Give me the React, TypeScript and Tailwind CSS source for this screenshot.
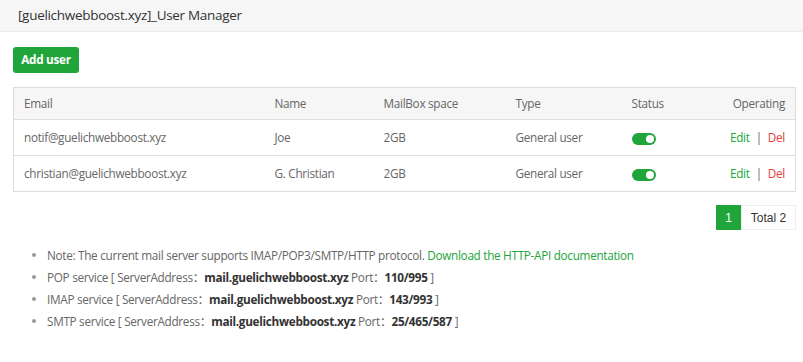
import React from "react";

type Row = { email: string; name: string; space: string; type: string };

const rows: Row[] = [
  { email: "notif@guelichwebboost.xyz", name: "Joe", space: "2GB", type: "General user" },
  { email: "christian@guelichwebboost.xyz", name: "G. Christian", space: "2GB", type: "General user" },
];

const services = [
  { label: "POP service", port: "110/995" },
  { label: "IMAP service", port: "143/993" },
  { label: "SMTP service", port: "25/465/587" },
];

const Toggle = () => (
  <span className="inline-flex items-center justify-end w-[24px] h-[12px] rounded-full bg-[#20a53a] pr-[2px]">
    <span className="w-[8px] h-[8px] rounded-full bg-white" />
  </span>
);

export default function App() {
  return (
    <div className="w-[803px] h-[362px] bg-white text-[11.75px] tracking-[-0.3px] text-[#666] font-['Open_Sans','Noto_Sans_CJK_SC',sans-serif] overflow-hidden">
      <div className="h-[32px] bg-[#f6f6f6] border-b border-[#eaeaea] flex items-center pl-[18px] text-[13.5px] text-[#333]">
        [guelichwebboost.xyz]_User Manager
      </div>

      <div className="pl-[13px] pr-[7px] pt-[15px]">
        <button className="h-[26px] w-[66px] rounded-[3px] bg-[#20a53a] text-white font-bold text-[11.75px]">
          Add user
        </button>

        <table className="mt-[14px] w-full border border-[#ddd] border-collapse">
          <thead>
            <tr className="bg-[#f6f6f6] h-[32px] text-left">
              <th className="font-normal pl-[10px] w-[261px]">Email</th>
              <th className="font-normal w-[109px]">Name</th>
              <th className="font-normal w-[132px]">MailBox space</th>
              <th className="font-normal w-[116px]">Type</th>
              <th className="font-normal">Status</th>
              <th className="font-normal text-right pr-[10px]">Operating</th>
            </tr>
          </thead>
          <tbody>
            {rows.map((r) => (
              <tr key={r.email} className="h-[36px] border-t border-[#ddd]">
                <td className="pl-[10px]">{r.email}</td>
                <td>{r.name}</td>
                <td>{r.space}</td>
                <td>{r.type}</td>
                <td className="align-middle pt-[2px]">
                  <Toggle />
                </td>
                <td className="text-right pr-[10px]">
                  <span className="text-[#20a53a]">Edit</span>
                  <span className="mx-[6px]">|</span>
                  <span className="text-[#e04040]">Del</span>
                </td>
              </tr>
            ))}
          </tbody>
        </table>

        <div className="flex justify-end mt-[13px]">
          <div className="flex h-[25px] text-[12px] tracking-normal font-['Liberation_Sans',Arial,sans-serif]">
            <span className="w-[25px] bg-[#20a53a] text-white flex items-center justify-center">1</span>
            <span className="w-[55px] border border-[#eee] text-[#333] flex items-center justify-center">Total 2</span>
          </div>
        </div>

        <ul className="mt-[14px] pl-[19px] leading-[22px]">
          <li className="flex items-center">
            <span className="w-[4px] h-[4px] rounded-full bg-[#999] mr-[11px]" />
            <span>
              Note: The current mail server supports IMAP/POP3/SMTP/HTTP protocol.{" "}
              <span className="text-[#20a53a]">Download the HTTP-API documentation</span>
            </span>
          </li>
          {services.map((s) => (
            <li key={s.label} className="flex items-center">
              <span className="w-[4px] h-[4px] rounded-full bg-[#999] mr-[11px]" />
              <span>
                {s.label} [ ServerAddress：<b className="text-[#333]">mail.guelichwebboost.xyz</b> Port：
                <b className="text-[#333]">{s.port}</b> ]
              </span>
            </li>
          ))}
        </ul>
      </div>
    </div>
  );
}
